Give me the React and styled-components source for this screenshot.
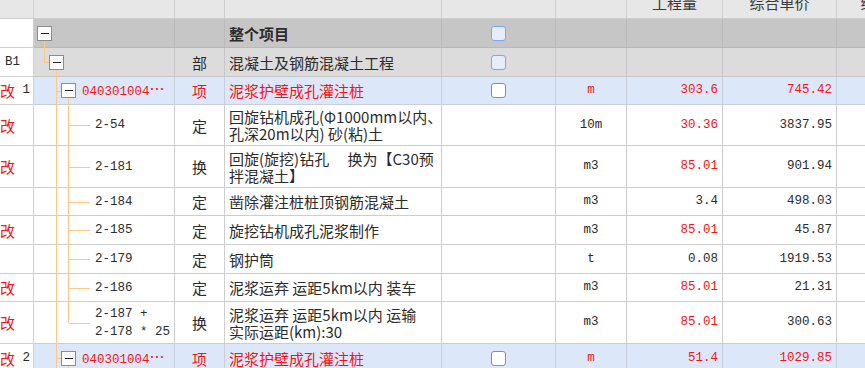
import React from 'react';
import styled, { createGlobalStyle } from 'styled-components';

const CJK = `"Noto Sans CJK SC", "Noto Sans", sans-serif`;
const MONO = `"Liberation Mono", "DejaVu Sans Mono", monospace`;
const RED = '#f21414';
const INK = '#2b2b2b';
const COLS = '34px 141px 50px 217px 114px 71px 96px 114px 108px';

const TONES = {
  header: { bg: '#e7e7e7', line: '#cdcdcd' },
  total: { bg: '#c6c6c6', line: '#b9b9b9' },
  section: { bg: '#dcdcdc', line: '#c6c6c6' },
  item: { bg: '#dce8fa', line: '#c9cfd8' },
  plain: { bg: '#ffffff', line: '#cdcdcd' },
};

const Global = createGlobalStyle`
  html, body { margin: 0; padding: 0; background: #fff; overflow: hidden; }
  body { font-family: ${CJK}; color: ${INK}; }
`;

const Table = styled.div`
  width: 945px;
  display: flex;
  flex-direction: column;
`;

const Row = styled.div`
  --line: ${p => TONES[p.$tone].line};
  display: grid;
  grid-template-columns: ${COLS};
  height: ${p => p.$h}px;
  background: ${p => TONES[p.$tone].bg};
`;

const Cell = styled.div`
  box-sizing: border-box;
  height: 100%;
  min-width: 0;
  border-right: 1px solid var(--line);
  border-bottom: 1px solid var(--line);
  display: flex;
  align-items: center;
  justify-content: ${p => (p.$align === 'right' ? 'flex-end' : p.$align === 'center' ? 'center' : 'flex-start')};
  padding: 0 ${p => (p.$align === 'right' ? '4px' : '0')} 0 ${p => (p.$align === 'left' ? '4px' : '0')};
  color: ${p => (p.$red ? RED : INK)};
  font-family: ${p => (p.$mono ? MONO : CJK)};
  font-size: ${p => (p.$mono ? '12.5px' : '15px')};
  font-weight: ${p => (p.$bold ? 700 : 400)};
  line-height: 17px;
  white-space: pre;
  overflow: hidden;
`;

const LeadCell = styled(Cell)`
  background: ${p => (p.$header ? 'transparent' : '#ffffff')};
  border-color: #cfcfcf;
`;

const HeaderCell = styled(Cell)`
  align-items: flex-end;
  justify-content: center;
  color: #3a3a3a;
`;

const HeaderText = styled.span`
  line-height: 15px;
  margin-bottom: 8px;
`;

const TreeCell = styled(Cell)`
  position: relative;
  overflow: visible;
`;

const TreeLines = styled.svg`
  position: absolute;
  left: 0;
  top: 0;
  height: calc(100% + 1px);
  width: 60px;
  pointer-events: none;
`;

const ExpandBox = styled.span`
  position: relative;
  z-index: 1;
  box-sizing: border-box;
  flex: none;
  width: 15px;
  height: 15px;
  margin-left: ${p => 3 + 12 * p.$level}px;
  border: 1px solid #8c8c8c;
  background: #fff;
  display: flex;
  align-items: center;
  justify-content: center;
  &::after {
    content: '';
    width: 8px;
    height: 1px;
    background: #222;
  }
`;

const Code = styled.span`
  position: relative;
  z-index: 1;
  margin-left: ${p => p.$gap}px;
  font-family: ${MONO};
  font-size: 12.5px;
  line-height: 18px;
  color: ${p => (p.$red ? RED : INK)};
  white-space: pre;
`;

const Ellipsis = styled.span`
  font-family: ${CJK};
  font-size: 15px;
`;

const Mark = styled.span`
  color: ${RED};
  font-family: ${CJK};
  font-size: 15px;
`;

const LeadNum = styled.span`
  font-family: ${MONO};
  font-size: 12.5px;
  color: ${INK};
  margin-left: ${p => p.$indent || 0}px;
`;

const Check = styled.span`
  box-sizing: border-box;
  width: 15px;
  height: 15px;
  border-radius: 3px;
  border: 1.5px solid ${p => (p.$blue ? '#78a9ee' : '#8e8e8e')};
  background: ${p => (p.$blue ? '#e7edf6' : '#ffffff')};
`;

const LINE = '#fcc98b';

function Tree({ kind }) {
  const v = (x, y1, y2) => <line x1={x} x2={x} y1={y1} y2={y2} />;
  const h = (x1, x2) => <line x1={x1} x2={x2} y1="50%" y2="50%" />;
  let segs = null;
  if (kind === 'root') segs = <>{v(10.5, '50%', '100%')}</>;
  if (kind === 'section')
    segs = <>{v(10.5, '0', '50%')}{h(10.5, 15)}{v(22.5, '50%', '100%')}</>;
  if (kind === 'item')
    segs = <>{v(22.5, '0', '100%')}{h(22.5, 27)}{v(34.5, '50%', '100%')}</>;
  if (kind === 'child')
    segs = <>{v(22.5, '0', '100%')}{v(34.5, '0', '100%')}{h(34.5, 56)}</>;
  if (kind === 'last')
    segs = <>{v(22.5, '0', '100%')}{v(34.5, '0', '50%')}{h(34.5, 56)}</>;
  return (
    <TreeLines shapeRendering="crispEdges" stroke={LINE} strokeWidth="1">
      {segs}
    </TreeLines>
  );
}

const rows = [
  { h: 29, tone: 'total', tree: 'root', level: 0, name: '整个项目', bold: true, check: 'blue' },
  { h: 29, tone: 'section', lead: 'B1', tree: 'section', level: 1, type: '部', name: '混凝土及钢筋混凝土工程', check: 'blue' },
  { h: 28, tone: 'item', mark: true, num: '1', tree: 'item', level: 2, code: '040301004', ell: true, red: true, type: '项', name: '泥浆护壁成孔灌注桩', check: 'plain', unit: 'm', qty: '303.6', price: '745.42', redAll: true },
  { h: 41, tone: 'plain', mark: true, tree: 'child', code: '2-54', type: '定', name: '回旋钻机成孔(Φ1000mm以内、\n孔深20m以内) 砂(粘)土', unit: '10m', qty: '30.36', redQty: true, price: '3837.95' },
  { h: 42, tone: 'plain', mark: true, tree: 'child', code: '2-181', type: '换', name: '回旋(旋挖)钻孔　 换为【C30预\n拌混凝土】', unit: 'm3', qty: '85.01', redQty: true, price: '901.94' },
  { h: 28, tone: 'plain', tree: 'child', code: '2-184', type: '定', name: '凿除灌注桩桩顶钢筋混凝土', unit: 'm3', qty: '3.4', price: '498.03' },
  { h: 29, tone: 'plain', mark: true, tree: 'child', code: '2-185', type: '定', name: '旋挖钻机成孔泥浆制作', unit: 'm3', qty: '85.01', redQty: true, price: '45.87' },
  { h: 29, tone: 'plain', tree: 'child', code: '2-179', type: '定', name: '钢护筒', unit: 't', qty: '0.08', price: '1919.53' },
  { h: 28, tone: 'plain', mark: true, tree: 'child', code: '2-186', type: '定', name: '泥浆运弃 运距5km以内 装车', unit: 'm3', qty: '85.01', redQty: true, price: '21.31' },
  { h: 42, tone: 'plain', mark: true, tree: 'last', code: '2-187 +\n2-178 * 25', type: '换', name: '泥浆运弃 运距5km以内 运输\n实际运距(km):30', unit: 'm3', qty: '85.01', redQty: true, price: '300.63' },
  { h: 29, tone: 'item', mark: true, num: '2', tree: 'item', level: 2, code: '040301004', ell: true, red: true, type: '项', name: '泥浆护壁成孔灌注桩', check: 'plain', unit: 'm', qty: '51.4', price: '1029.85', redAll: true },
];

function DataRow({ r }) {
  const hasBox = r.level !== undefined;
  return (
    <Row $h={r.h} $tone={r.tone}>
      <LeadCell>
        {r.mark && <Mark>改</Mark>}
        {r.num && <LeadNum> {r.num}</LeadNum>}
        {r.lead && <LeadNum $indent={5}>{r.lead}</LeadNum>}
      </LeadCell>
      <TreeCell>
        <Tree kind={r.tree} />
        {hasBox && <ExpandBox $level={r.level} />}
        {r.code && (
          <Code $gap={hasBox ? 6 : 61} $red={r.red}>
            {r.code}
            {r.ell && <Ellipsis>…</Ellipsis>}
          </Code>
        )}
      </TreeCell>
      <Cell $align="center" $red={r.redAll}>{r.type}</Cell>
      <Cell $align="left" $red={r.redAll} $bold={r.bold}>{r.name}</Cell>
      <Cell $align="center">{r.check && <Check $blue={r.check === 'blue'} />}</Cell>
      <Cell $align="center" $mono $red={r.redAll}>{r.unit}</Cell>
      <Cell $align="right" $mono $red={r.redAll || r.redQty}>{r.qty}</Cell>
      <Cell $align="right" $mono $red={r.redAll}>{r.price}</Cell>
      <Cell />
    </Row>
  );
}

export default function App() {
  return (
    <>
      <Global />
      <Table>
        <Row $h={19} $tone="header">
          <LeadCell $header />
          <HeaderCell />
          <HeaderCell />
          <HeaderCell />
          <HeaderCell />
          <HeaderCell />
          <HeaderCell><HeaderText>工程量</HeaderText></HeaderCell>
          <HeaderCell><HeaderText>综合单价</HeaderText></HeaderCell>
          <HeaderCell><HeaderText>综合合价</HeaderText></HeaderCell>
        </Row>
        {rows.map((r, i) => (
          <DataRow key={i} r={r} />
        ))}
      </Table>
    </>
  );
}
